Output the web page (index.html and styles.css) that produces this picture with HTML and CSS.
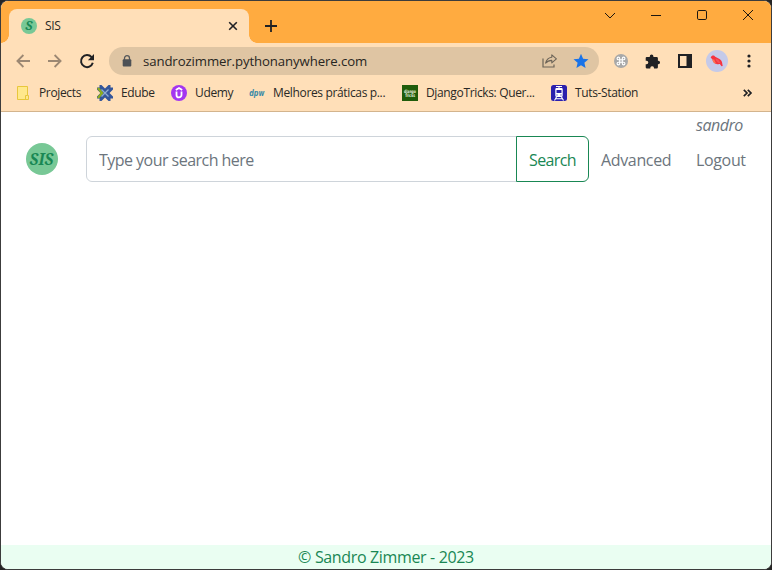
FILE: index.html
```html
<!DOCTYPE html>
<html lang="en">
<head>
<meta charset="utf-8">
<title>SIS</title>
<link rel="stylesheet" href="styles.css">
</head>
<body>
<div class="window">
  <header class="tabstrip">
    <div class="tab">
      <svg class="tab-icon" width="16" height="16" viewBox="0 0 16 16"><circle cx="8" cy="8" r="8" fill="#78c896"/><text x="8" y="12.4" text-anchor="middle" class="favicon-text">S</text></svg>
      <span class="tab-title">SIS</span>
      <svg class="tab-close" width="10" height="10" viewBox="0 0 10 10"><path d="M1.200 1.200l7.600 7.600M8.800 1.200L1.200 8.800" stroke="#202124" stroke-width="1.600" fill="none"/></svg>
    </div>
    <svg class="new-tab" width="12" height="12" viewBox="0 0 12 12"><path d="M6 0v12M0 6h12" stroke="#202124" stroke-width="1.800"/></svg>
    <div class="controls">
      <svg width="12" height="12" viewBox="0 0 12 12"><path d="M1 4l5 5 5-5"/></svg>
      <svg width="12" height="12" viewBox="0 0 12 12"><path d="M1 6.500h10"/></svg>
      <svg width="12" height="12" viewBox="0 0 12 12"><rect x="1.500" y="1.500" width="9" height="9" rx="1.300"/></svg>
      <svg width="12" height="12" viewBox="0 0 12 12"><path d="M1 1l10 10M11 1L1 11"/></svg>
    </div>
  </header>
  <div class="toolbar">
    <svg class="nav-icon" width="14" height="14" viewBox="0 0 14 14"><path d="M14 7H1.500M7.400 1L1.400 7l6 6" fill="none" stroke="#9c8873" stroke-width="1.800"/></svg>
    <svg class="nav-icon" width="14" height="14" viewBox="0 0 14 14"><path d="M0 7h12.500M6.600 1l6 6-6 6" fill="none" stroke="#9c8873" stroke-width="1.800"/></svg>
    <svg class="nav-icon" width="14" height="14" viewBox="0 0 14 14"><path d="M11.600 3.200A6 6 0 1 0 12.800 8.800" fill="none" stroke="#202124" stroke-width="2"/><path d="M14 0v6.200H7.900z" fill="#202124"/></svg>
    <div class="omnibox">
      <svg class="lock" width="10" height="12" viewBox="0 0 10 12"><path d="M2.500 5V3.200a2.500 2.500 0 0 1 5 0V5" fill="none" stroke="#55585b" stroke-width="1.300"/><rect x=".7" y="4.200" width="8.600" height="7.300" rx="1" fill="#4d5156"/></svg>
      <span class="url">sandrozimmer.pythonanywhere.com</span>
      <svg class="share" width="16" height="14" viewBox="0 0 16 14"><path d="M1 4.500V13h11v-2.500" fill="none" stroke="#6c6458" stroke-width="1.200"/><path d="M9.800.9l4.600 3.900-4.600 4V6.400C6.800 6.400 5 7.500 3.600 9.200 4.200 6 6.200 3.700 9.800 3.200z" fill="none" stroke="#6c6458" stroke-width="1.100" stroke-linejoin="round"/></svg>
      <svg class="star" width="16" height="16" viewBox="0 0 16 16"><path d="M8 .7l2.100 5 5.400.5-4.100 3.500 1.200 5.300L8 12.200 3.400 15l1.200-5.300L.5 6.200l5.400-.5z" fill="#1a73e8"/></svg>
    </div>
    <div class="extensions">
      <svg width="14" height="14" viewBox="0 0 14 14"><circle cx="7" cy="7" r="7" fill="#a8a8a8"/><path d="M5.700 5.700h2.600v2.600H5.700zM5.700 5.700H4.400a1.300 1.300 0 1 1 1.300-1.300zM8.300 5.700V4.400a1.300 1.300 0 1 1 1.300 1.300zM8.300 8.300h1.300a1.300 1.300 0 1 1-1.300 1.300zM5.700 8.300v1.300a1.300 1.300 0 1 1-1.300-1.300z" fill="none" stroke="#fff" stroke-width="1.100"/></svg>
      <svg width="15" height="15" viewBox="0 0 15 15"><path d="M1.800 3h3V2.300a1.700 1.700 0 0 1 3.600 0V3h3.200a1.300 1.300 0 0 1 1.300 1.300v2.500h.4a1.700 1.700 0 0 1 0 3.500h-.4v3a1.300 1.300 0 0 1-1.300 1.300H9v-.8a1.900 1.900 0 0 0-3.700 0v.8H2A1.300 1.300 0 0 1 .7 13.300v-3h.8a1.800 1.800 0 0 0 0-3.600H.7V4.100A1.100 1.100 0 0 1 1.800 3z" fill="#202124"/></svg>
      <svg width="14" height="14" viewBox="0 0 14 14"><path d="M0 0h14v14H0zM2 2v10h6.500V2z" fill="#202124" fill-rule="evenodd"/></svg>
      <svg width="22" height="22" viewBox="0 0 22 22"><circle cx="11" cy="11" r="11" fill="#c5cae9"/><path d="M4.800 7.200C5.800 5 8.200 4.900 9.200 6.800l4.300 2.200c1.900 1.200 2.600 2.800 2.700 4.300l.5 2.700-1.200.3-1.700-2.200c-2.900.6-7-.6-7.300-4.600L4.800 7.800z" fill="#f5333f"/><path d="M9.500 8.500l3 1.300 2 3.500c-2.700-.2-4.400-1.800-5-4.800z" fill="#f4525a"/><path d="M6.500 9.500c.2 2.400 2 4 4.500 4.300-1.500-1-2.500-2.800-2.700-4.300z" fill="#ff7a55"/></svg>
      <svg width="4" height="14" viewBox="0 0 4 14" fill="#202124"><circle cx="2" cy="2" r="1.600"/><circle cx="2" cy="7" r="1.600"/><circle cx="2" cy="12" r="1.600"/></svg>
    </div>
  </div>
  <nav class="bookmarks">
    <a class="bm bm-projects"><svg width="16" height="16" viewBox="0 0 16 16"><path d="M1.500 1.500h10v9h1v4h-11z" fill="#ffe88c" stroke="#e8c73c"/><path d="M9.500 14v-3.500h2" fill="none" stroke="#e8c73c"/></svg><span>Projects</span></a>
    <a class="bm bm-edube"><svg width="16" height="16" viewBox="0 0 16 16"><path d="M2.500 0h2L8 3.500 11.500 0h2v2.500H16v2L12.500 8l3.500 3.500v2h-2.500V16h-2L8 12.500 4.500 16h-2v-2.500H0v-2L3.500 8 0 4.500v-2h2.500z" fill="#34569a"/><path d="M0 3.500L2 2.500 6.500 8 2 13.500l-2-1L3.500 8z" fill="#8fae1b"/><path d="M4.500 4.500l7 7M11.500 4.500l-7 7" stroke="#8fadd0" stroke-width="1.300"/></svg><span>Edube</span></a>
    <a class="bm bm-udemy"><svg width="16" height="16" viewBox="0 0 16 16"><circle cx="8" cy="8" r="8" fill="#a435f0"/><path d="M4.800 5L8 3.100 11.200 5M5.500 6.500v3.400a2.500 2.500 0 0 0 5 0V6.500" fill="none" stroke="#fff" stroke-width="1.800"/></svg><span>Udemy</span></a>
    <a class="bm bm-dpw"><svg width="16" height="16" viewBox="0 0 16 16"><text x=".2" y="10.500" textLength="15.200" lengthAdjust="spacingAndGlyphs" class="dpw-text">dpw</text></svg><span>Melhores práticas p...</span></a>
    <a class="bm bm-django"><svg width="16" height="16" viewBox="0 0 16 16"><path d="M0 0h16v16H0z" fill="#205c0b"/><text x="2" y="7.500" textLength="12" lengthAdjust="spacingAndGlyphs" class="django-text">django</text><text x="3" y="11.500" textLength="10" lengthAdjust="spacingAndGlyphs" class="django-text">Tricks</text></svg><span>DjangoTricks: Quer...</span></a>
    <a class="bm bm-tuts"><svg width="16" height="16" viewBox="0 0 16 16"><rect width="16" height="16" rx="2.500" fill="#2b20ad"/><path d="M5 1.500h6M8 1.500V3M5.500 12L3.500 15.500M10.500 12l2 3.500M4.800 13.800h6.400" fill="none" stroke="#fff" stroke-width="1.100"/><path d="M5.500 3h5a1.200 1.200 0 0 1 1.200 1.200v6.300A1.500 1.500 0 0 1 10.200 12H5.800a1.500 1.500 0 0 1-1.500-1.500V4.200A1.200 1.200 0 0 1 5.500 3z" fill="#fff"/><path d="M5.500 5h5v3h-5zM5.500 9.500h1v1h-1zM9.500 9.500h1v1h-1z" fill="#2b20ad"/></svg><span>Tuts-Station</span></a>
    <svg class="overflow" width="9" height="8" viewBox="0 0 9 8"><path d="M.8.800L4 4 .8 7.200M4.800.800L8 4 4.800 7.200" fill="none" stroke="#202124" stroke-width="1.700"/></svg>
  </nav>
  <main class="page">
    <div class="user"><em>sandro</em></div>
    <div class="search-row">
      <svg class="logo" width="32" height="32" viewBox="0 0 32 32"><circle cx="16" cy="16" r="16" fill="#78c896"/><text x="15.500" y="21.600" text-anchor="middle" textLength="24" lengthAdjust="spacingAndGlyphs" class="logo-text">SIS</text></svg>
      <form class="search">
        <input type="text" placeholder="Type your search here">
        <button type="button"><span>Search</span></button>
      </form>
      <a class="advanced">Advanced</a>
      <a class="logout">Logout</a>
    </div>
  </main>
  <footer class="footer"><span>© Sandro Zimmer - 2023</span></footer>
</div>
</body>
</html>
```
FILE: styles.css
```css
* { box-sizing: border-box; }
body { margin: 0; background: #252525; font-family: "Open Sans", "Noto Sans", sans-serif; }
svg { display: block; flex: none; overflow: visible; }
.window { width: 772px; height: 570px; border: 1px solid #3c3c3c; border-radius: 8px; overflow: hidden; display: flex; flex-direction: column; background: #fff; }
.tabstrip { height: 42px; flex: none; display: flex; background: #ffab40; padding-left: 8px; }
.tab { position: relative; width: 240px; height: 34px; margin-top: 8px; border-radius: 8px 8px 0 0; background: #ffdfb8; display: flex; align-items: center; padding: 0 11px 0 12px; }
.tab::before, .tab::after { content: ""; position: absolute; bottom: 0; width: 8px; height: 8px; }
.tab::before { left: -8px; background: radial-gradient(circle at 0 0, #ffab40 7.500px, #ffdfb8 8px); }
.tab::after { right: -8px; background: radial-gradient(circle at 100% 0, #ffab40 7.500px, #ffdfb8 8px); }
.favicon-text { font: italic bold 12.500px "Noto Serif", "DejaVu Serif", serif; fill: #198754; }
.tab-title { font-size: 12px; letter-spacing: -.35px; margin: -2px 0 0 8px; color: #2a2926; }
.tab-close { margin-left: auto; }
.new-tab { margin: 19px 0 0 16px; }
.controls { margin: 8px 17px 0 auto; display: flex; gap: 34px; height: 12px; }
.controls svg { fill: none; stroke: #1d1710; stroke-width: 1; }
.toolbar { height: 36px; flex: none; display: flex; align-items: center; background: #ffdfb8; padding-left: 15px; }
.nav-icon { margin-right: 18px; }
.nav-icon:nth-of-type(3) { margin-right: 15px; }
.omnibox { width: 490px; height: 28px; border-radius: 14px; background: #dfc5a3; display: flex; align-items: center; padding: 0 10px 0 13px; }
.url { font-size: 13.200px; letter-spacing: -.1px; margin-left: 11px; color: #282622; white-space: nowrap; }
.share { margin-left: auto; margin-right: 15px; }
.extensions { display: flex; align-items: center; padding-left: 15px; }
.extensions svg:nth-child(2) { margin-left: 17px; }
.extensions svg:nth-child(3) { margin-left: 18px; }
.extensions svg:nth-child(4) { margin-left: 14px; }
.extensions svg:nth-child(5) { margin-left: 19px; }
.bookmarks { height: 33px; flex: none; display: flex; background: #ffdfb8; padding: 6px 0 0 15px; border-bottom: 1px solid #d3b48d; }
.bm { display: flex; align-items: center; height: 16px; font-size: 12px; line-height: 16px; color: #2a2926; letter-spacing: -.35px; white-space: nowrap; flex: none; }
.bm span { margin-left: 8px; }
.bm-projects { width: 81px; }
.bm-projects span { margin-left: 7px; }
.bm-edube { width: 74px; }
.bm-udemy { width: 78px; }
.bm-dpw { width: 153px; }
.bm-django { width: 149px; }
.bm-tuts { width: 192px; }
.dpw-text { font: italic bold 8px "DejaVu Sans", sans-serif; fill: #3b8aa7; letter-spacing: 0; }
.django-text { font: bold 4.500px "DejaVu Sans", sans-serif; fill: #e6f0df; letter-spacing: 0; }
.overflow { margin-top: 4px; }
.page { flex: 1; color: #6c757d; font-size: 16px; letter-spacing: -.35px; }
.user { height: 24px; line-height: 26px; padding-left: 695px; }
.user em { letter-spacing: -.5px; }
.search-row { display: flex; align-items: center; height: 46px; padding-left: 25px; }
.logo-text { font: italic bold 16px "Noto Serif", "DejaVu Serif", serif; fill: #198754; letter-spacing: 0; }
.search { display: flex; width: 503px; height: 46px; margin: 0 12px 0 28px; }
.search input { width: 431px; height: 46px; border: 1px solid #ced4da; border-radius: 6px 0 0 6px; padding: 1px 12px 0; font: 16px "Open Sans", sans-serif; letter-spacing: -.53px; color: #212529; outline: 0; }
.search input::placeholder { color: #6c757d; opacity: 1; }
.search button { width: 73px; height: 46px; margin-left: -1px; border: 1px solid #198754; border-radius: 0 6px 6px 0; background: #fff; color: #198754; font: 16px "Open Sans", sans-serif; letter-spacing: -.6px; padding: 1px 0 0; flex: none; }
.advanced, .logout { padding-top: 1px; }
.advanced { width: 95px; }
.footer { height: 24px; flex: none; background: #eafef2; color: #198754; text-align: center; font-size: 16px; letter-spacing: -.35px; line-height: 25px; }
```
